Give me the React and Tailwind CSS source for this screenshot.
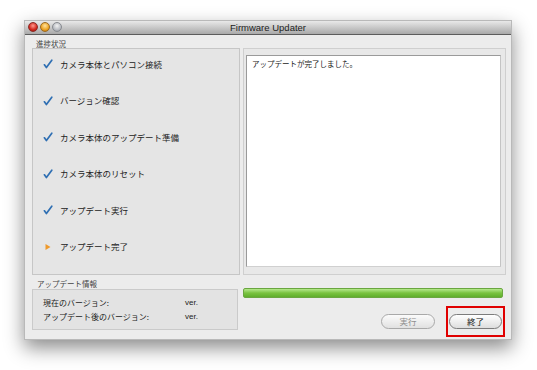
import React from 'react';

const jp = { fontFamily: '"Noto Sans CJK JP", "Noto Sans", sans-serif' };

const steps = [
    { label: 'カメラ本体とパソコン接続', done: true },
    { label: 'バージョン確認', done: true },
    { label: 'カメラ本体のアップデート準備', done: true },
    { label: 'カメラ本体のリセット', done: true },
    { label: 'アップデート実行', done: true },
    { label: 'アップデート完了', done: false },
];

const Check = () => (
    <svg width="10" height="10" viewBox="0 0 10 10" className="shrink-0">
        <path d="M1.4 5.8 L3.4 8.6 L8.8 1.2" fill="none" stroke="#2f6fb3" strokeWidth="1.7" strokeLinecap="round" strokeLinejoin="round" />
    </svg>
);

const Arrow = () => (
    <svg width="10" height="10" viewBox="0 0 10 10" className="shrink-0">
        <path d="M2.5 2 L7.5 5 L2.5 8 Z" fill="#ef9a2c" />
    </svg>
);

const App = () => {
    return (
        <div className="w-[537px] h-[370px] bg-white overflow-hidden" style={jp}>
            <div className="ml-[24px] mt-[20px] w-[488px] h-[320px] bg-[#ececec] border border-[#b9b9b9] shadow-[0_8px_18px_rgba(0,0,0,0.45)] flex flex-col">
                {/* title bar */}
                <div className="h-[14px] shrink-0 relative flex items-center justify-center bg-gradient-to-b from-[#e9e9e9] to-[#a9a9a9] border-b border-[#5c5c5c]">
                    <div className="absolute left-[3px] top-[1px] flex gap-[2px]">
                        <span className="w-[10px] h-[10px] rounded-full bg-[radial-gradient(circle_at_50%_35%,#ff9a8f,#d2261c_60%,#8c1710)] border border-[#8b2b26]" />
                        <span className="w-[10px] h-[10px] rounded-full bg-[radial-gradient(circle_at_50%_35%,#ffe3a0,#eda321_60%,#a9650d)] border border-[#9c6a22]" />
                        <span className="w-[10px] h-[10px] rounded-full bg-[radial-gradient(circle_at_50%_35%,#f2f2f2,#b9bcc2_60%,#8e9196)] border border-[#888b90]" />
                    </div>
                    <span className="text-[9.5px] text-[#222] leading-none" style={{ fontFamily: '"Liberation Sans", Arial, sans-serif' }}>
                        Firmware Updater
                    </span>
                </div>

                <div className="pl-[7px] pr-[5px] flex flex-col">
                    <div className="h-[13px] flex items-end pl-[4px] pb-[1px] text-[7.5px] leading-none text-[#444]">進捗状況</div>

                    <div className="flex gap-[3px] h-[227px]">
                        {/* steps */}
                        <div className="w-[208px] bg-[#e5e5e5] border border-[#c6c6c6] pl-[10px] overflow-hidden">
                            <div className="flex flex-col -mt-[3px]">
                                {steps.map((s, i) => (
                                    <div key={i} className="h-[36.5px] flex items-center gap-[7px] text-[8.5px] text-[#222]">
                                        {s.done ? <Check /> : <Arrow />}
                                        <span>{s.label}</span>
                                    </div>
                                ))}
                            </div>
                        </div>

                        {/* log */}
                        <div className="flex-1 border border-[#cfcfcf] bg-[#e8e8e8] pt-[6px] pl-[2px] pr-[4px] pb-[7px]">
                            <div className="h-full bg-white border border-[#9a9a9a] border-b-[#d0d0d0] border-r-[#c4c4c4] pl-[5px] pt-[3px] text-[7.5px] text-[#222] leading-tight">
                                アップデートが完了しました。
                            </div>
                        </div>
                    </div>

                    <div className="flex gap-[5px]">
                        <div className="w-[206px] flex flex-col">
                            <div className="h-[14px] flex items-end pl-[5px] pb-[2px] text-[7.5px] leading-none text-[#444]">アップデート情報</div>
                            <div className="h-[41px] bg-[#e3e3e3] border border-[#cacaca] flex flex-col justify-center gap-[6px] pl-[10px] text-[8px] text-[#222] leading-none">
                                <div className="flex">
                                    <span className="w-[142px]">現在のバージョン:</span>
                                    <span style={{ fontFamily: '"Liberation Sans", Arial, sans-serif' }}>ver.</span>
                                </div>
                                <div className="flex">
                                    <span className="w-[142px]">アップデート後のバージョン:</span>
                                    <span style={{ fontFamily: '"Liberation Sans", Arial, sans-serif' }}>ver.</span>
                                </div>
                            </div>
                        </div>

                        <div className="flex-1 flex flex-col pr-[3px]">
                            <div className="mt-[13px] h-[10px] rounded-[2px] border border-[#6aa640] bg-gradient-to-b from-[#b5e98a] via-[#79c33f] to-[#5fae2c]" />
                            <div className="mt-[8px] flex justify-end items-center gap-[11px]">
                                <button className="w-[54px] h-[15px] rounded-full border border-[#a9a9a9] bg-gradient-to-b from-[#fbfbfb] to-[#e1e1e1] text-[8.5px] leading-none text-[#8e8e8e]">
                                    実行
                                </button>
                                <div className="border-2 border-[#e00000] px-[1px] py-[6px] -mr-[2px]">
                                    <button className="w-[53px] h-[15px] rounded-full border border-[#7c7c7c] bg-gradient-to-b from-white to-[#dedede] text-[8.5px] leading-none text-[#111] block">
                                        終了
                                    </button>
                                </div>
                            </div>
                        </div>
                    </div>
                </div>
            </div>
        </div>
    );
};

export default App;
